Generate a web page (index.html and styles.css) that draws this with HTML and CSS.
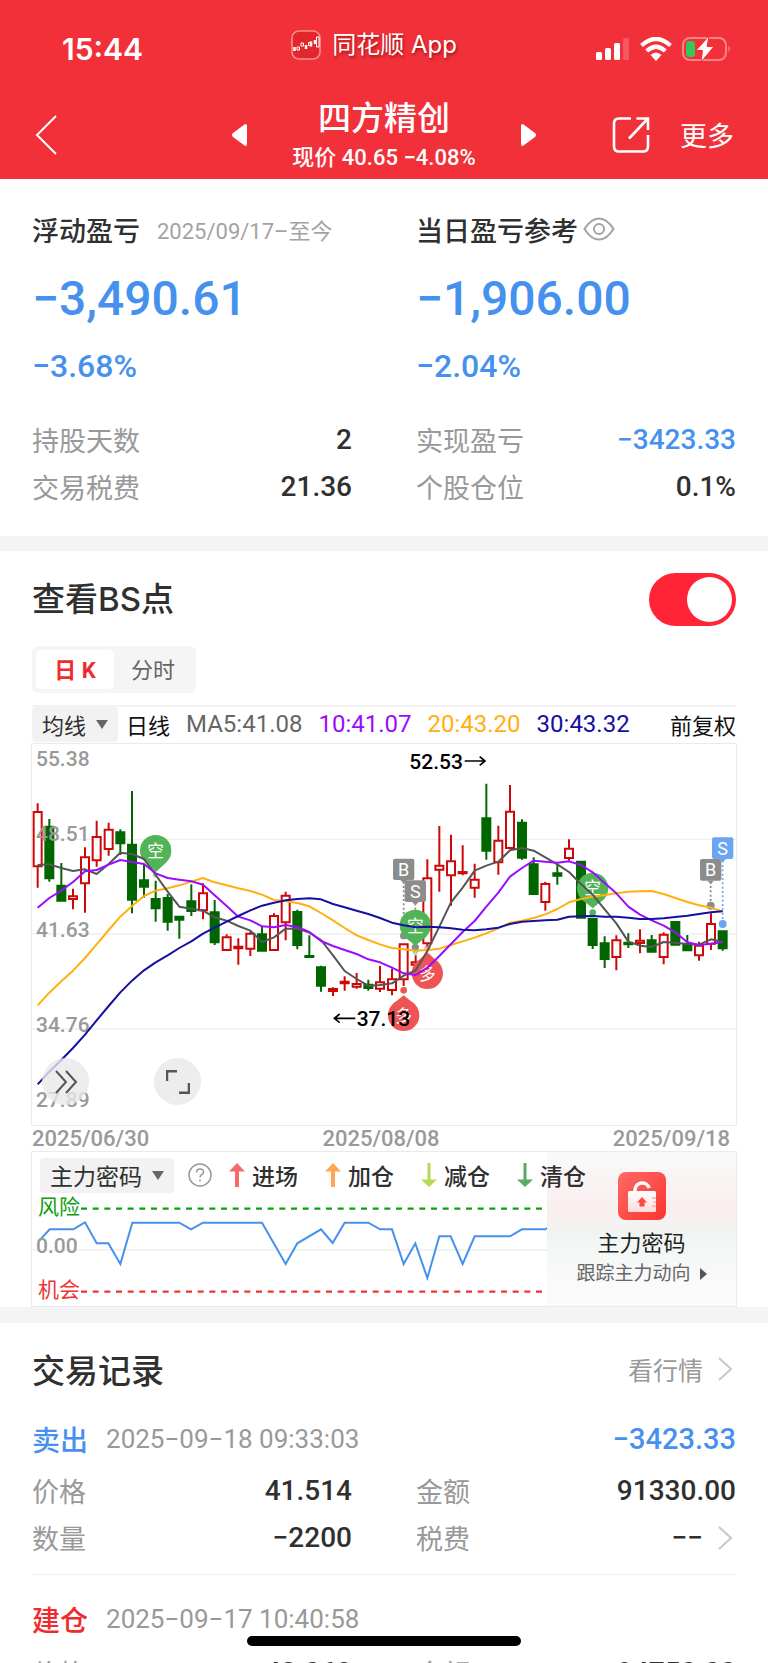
FILE: index.html
```html
<!DOCTYPE html>
<html lang="zh-CN">
<head>
<meta charset="utf-8">
<meta name="viewport" content="width=device-width, initial-scale=1">
<title>四方精创</title>
<link rel="stylesheet" href="styles.css">
</head>
<body>
<div class="screen">
  <header class="header">
    <div class="status">
      <span class="status-time">15:44</span>
      <span class="status-app">
        <svg class="app-icon" viewBox="0 0 30 30" aria-hidden="true">
          <rect x="1" y="1" width="28" height="28" rx="7" fill="#e3262b" stroke="#fa8f8f" stroke-width="1.6"/>
          <path d="M3.500 17v4M20 11.500v5M24 10v4M15 15v4" stroke="#fff" stroke-width="2.500"/>
          <path d="M6 17h2.500v3H6zM10 13h2.500v3H10zM17.500 12.500h2v3h-2zM25.500 7h2.500v10h-2.500z" fill="none" stroke="#fff"/>
        </svg>
        同花顺 App
      </span>
      <span class="status-icons">
        <svg width="34" height="24" viewBox="0 0 34 24" aria-hidden="true" fill="#fff">
          <rect x="0" y="15" width="6" height="8" rx="1.500"/><rect x="9" y="11" width="6" height="12" rx="1.500"/>
          <rect x="18" y="6" width="6" height="17" rx="1.500"/><rect x="27" y="1" width="6" height="22" rx="1.500" opacity=".2"/>
        </svg>
        <svg width="32" height="24" viewBox="0 0 32 24" aria-hidden="true" fill="none" stroke="#fff" stroke-width="4.200">
          <path d="M1.500 8.500Q16-4.500 30.500 8.500"/><path d="M6.700 14Q16 5.500 25.300 14"/>
          <path d="M10.500 18Q16 13 21.500 18L16 24z" fill="#fff" stroke="none"/>
        </svg>
        <svg width="50" height="26" viewBox="0 0 50 26" aria-hidden="true">
          <rect x="1" y="2" width="43" height="22" rx="7" fill="none" stroke="#f98388" stroke-width="2"/>
          <path d="M46.500 9.500q3 3.500 0 7z" fill="#f98388"/>
          <rect x="4" y="5" width="9" height="16" rx="3.500" fill="#34c759"/>
          <path d="M27 0L14 14.500h6.500L19 26 32 10.500h-7z" fill="#fff" stroke="#f23039" stroke-width="1"/>
        </svg>
      </span>
    </div>
    <nav class="nav">
      <button class="icon-btn nav-back" aria-label="返回">
        <svg width="24" height="40" viewBox="0 0 24 40" fill="none" stroke="#fff" stroke-width="2"><path d="M22 1L3 20l19 19"/></svg>
      </button>
      <div class="nav-center">
        <button class="icon-btn" aria-label="上一只"><svg width="17" height="24" viewBox="0 0 17 24" fill="#fff"><path d="M13.500 1.500Q16 0 16 3V21q0 3-2.500 1.500L2 14q-2-2 0-4z"/></svg></button>
        <div class="nav-title">
          <h1>四方精创</h1>
          <p>现价 40.65 −4.08%</p>
        </div>
        <button class="icon-btn" aria-label="下一只"><svg width="17" height="24" viewBox="0 0 17 24" fill="#fff"><path d="M3.500 1.500Q1 0 1 3V21q0 3 2.500 1.500L15 14q2-2 0-4z"/></svg></button>
      </div>
      <div class="nav-right">
        <button class="icon-btn" aria-label="分享"><svg width="38" height="38" viewBox="0 0 38 38" fill="none" stroke="#fff" stroke-width="2.600"><path d="M19 2.500H7q-5 0-5 5V30.500q0 5 5 5H31q5 0 5-5V19"/><path d="M24.500 2.500H36V14M36 2.500L17 22.500"/></svg></button>
        <button class="icon-btn nav-more">更多</button>
      </div>
    </nav>
  </header>

  <section class="summary">
    <div class="col">
      <h2>浮动盈亏 <small>2025/09/17–至今</small></h2>
      <p class="big">−3,490.61</p>
      <p class="pct">−3.68%</p>
      <dl class="facts">
        <div><dt>持股天数</dt><dd>2</dd></div>
        <div><dt>交易税费</dt><dd>21.36</dd></div>
      </dl>
    </div>
    <div class="col">
      <h2>当日盈亏参考<button class="icon-btn" aria-label="隐藏金额"><svg width="32" height="24" viewBox="0 0 32 24" fill="none" stroke="#a3a3a3" stroke-width="2"><path d="M1.500 12Q8 1.500 16 1.500T30.500 12Q24 22.500 16 22.500T1.500 12z"/><circle cx="16" cy="12" r="5"/></svg></button></h2>
      <p class="big">−1,906.00</p>
      <p class="pct">−2.04%</p>
      <dl class="facts">
        <div><dt>实现盈亏</dt><dd class="down">−3423.33</dd></div>
        <div><dt>个股仓位</dt><dd>0.1%</dd></div>
      </dl>
    </div>
  </section>

  <section class="points">
    <div class="points-head">
      <label for="bs">查看BS点</label>
      <input class="switch" type="checkbox" role="switch" id="bs" checked>
    </div>
    <div class="tabs">
      <button class="tab tab-on">日 K</button>
      <button class="tab">分时</button>
    </div>
    <div class="ma">
      <div class="ma-kind">
        <button class="drop">均线 <i class="caret"></i></button>
        <span class="ma-note">日线</span>
      </div>
      <span class="ma5">MA5:41.08</span>
      <span class="ma10">10:41.07</span>
      <span class="ma20">20:43.20</span>
      <span class="ma30">30:43.32</span>
      <span class="ma-note ma-adj">前复权</span>
    </div>
    <div class="kline">
      <svg class="kline-svg" viewBox="96 12 2112 1143" role="img" aria-label="日K线">
        <path class="grid" d="M96 298H2208M96 582H2208M96 867H2208"/>
        <g id="candles"></g>
        <g class="axis">
          <text x="108" y="78">55.38</text><text x="108" y="302">48.51</text><text x="108" y="590">41.63</text><text x="108" y="875">34.76</text><text x="108" y="1100">27.89</text>
        </g>
        <g class="marks">
          <g class="tag">
            <path class="dots" d="M1211 425V585M1246 490V620M2132 425V490"/>
            <rect x="1179" y="356" width="64" height="64" rx="6"/><path d="M1201 420h20l-10 10z"/><circle cx="1211" cy="587" r="11"/>
            <rect x="1214" y="421" width="64" height="65" rx="6"/><path d="M1236 486h20l-10 10z"/><circle cx="1246" cy="622" r="11"/>
            <rect x="2100" y="357" width="64" height="65" rx="6"/><path d="M2122 422h20l-10 10z"/><circle cx="2132" cy="497" r="12"/>
            <text x="1211" y="408">B</text><text x="1246" y="473">S</text><text x="2132" y="409">B</text>
          </g>
          <g class="tag tag-blue">
            <path class="dots" d="M2168 362V545"/>
            <rect x="2136" y="292" width="64" height="65" rx="6"/><path d="M2158 357h20l-10 10z"/><circle cx="2168" cy="552" r="12"/>
            <text x="2168" y="344">S</text>
          </g>
          <g class="pin pin-short">
            <circle cx="467" cy="332" r="47"/><path d="M434 366h66l-33 31z"/><circle cx="466" cy="405" r="8" opacity=".5"/><text x="467" y="351">空</text>
            <circle cx="1246" cy="556" r="47"/><path d="M1213 590h66l-33 27z"/><circle cx="1246" cy="636" r="8" opacity=".5"/><text x="1246" y="575">空</text>
            <circle cx="1778" cy="445" r="47"/><path d="M1745 478h66l-33 27z"/><circle cx="1778" cy="518" r="10"/><text x="1778" y="463">空</text>
          </g>
          <g class="pin pin-long">
            <circle cx="1282" cy="700" r="47"/><path d="M1250 666h64l-32-29z"/><circle cx="1282" cy="624" r="9" opacity=".5"/><text x="1282" y="719">多</text>
            <circle cx="1211" cy="826" r="47"/><path d="M1179 792h64l-32-26z"/><circle cx="1211" cy="751" r="10"/><text x="1211" y="845">多</text>
          </g>
        </g>
        <g id="averages"></g>
        <g class="peak">
          <text x="1228" y="86">52.53</text><path d="M1394 63h61m-16-13l16 13-16 13"/>
          <text x="1070" y="858">37.13</text><path d="M1066 835h-63m16-13l-16 13 16 13"/>
        </g>
      </svg>
      <button class="round round-next" aria-label="展开"><svg width="24" height="24" viewBox="0 0 24 24" fill="none" stroke="#555" stroke-width="2"><path d="M2 1l10 11L2 23M12 1l10 11-10 11"/></svg></button>
      <button class="round round-full" aria-label="全屏"><svg width="24" height="24" viewBox="0 0 24 24" fill="none" stroke="#555" stroke-width="2.500"><path d="M1 11V1.300H11M23 13v9.700H13"/></svg></button>
    </div>
    <div class="dates"><span>2025/06/30</span><span>2025/08/08</span><span>2025/09/18</span></div>
    <div class="code">
      <div class="legend">
        <button class="drop">主力密码 <i class="caret"></i></button>
        <svg class="help" width="24" height="24" viewBox="0 0 24 24" fill="none" stroke="#999" stroke-width="1.500" role="img" aria-label="说明"><circle cx="12" cy="12" r="11"/><path d="M8.500 9.500q0-3.500 3.500-3.500t3.500 3q0 1.500-1.800 2.700T12 14.500M12 16.500v2"/></svg>
        <span class="sig"><svg width="16" height="24" viewBox="0 0 16 24" fill="#f76b6b"><path d="M8 0l8 8.500H10V24H6V8.500H0z"/></svg>进场</span>
        <span class="sig"><svg width="16" height="24" viewBox="0 0 16 24" fill="#ffa657"><path d="M8 0l8 8.500H10V24H6V8.500H0z"/></svg>加仓</span>
        <span class="sig"><svg width="16" height="24" viewBox="0 0 16 24" fill="#b2dc55"><path d="M8 24l8-7.500H9.500V0h-3v16.500H0z"/></svg>减仓</span>
        <span class="sig"><svg width="16" height="24" viewBox="0 0 16 24" fill="#5caa62"><path d="M8 24l8-7.500H9.500V0h-3v16.500H0z"/></svg>清仓</span>
      </div>
      <svg class="code-svg" viewBox="96 222 1545 336" role="img" aria-label="主力密码走势">
        <path class="grid" d="M96 390H1641"/>
        <path class="risk" d="M243 266H1641"/>
        <path class="chance" d="M243 515H1641"/>
        <path class="trend" d="M118 362L149 328H220L255 307L290 370H325L361 432L397 308H538L573 328L609 308H786L857 432L892 370L963 328L998 369L1034 308H1105L1140 328H1176L1211 432L1246 370L1282 474L1318 349H1352L1388 432L1424 349H1530L1566 328H1637L1641 323"/>
        <text class="risk-t" x="114" y="283">风险</text><text class="zero-t" x="108" y="400">0.00</text><text class="chance-t" x="114" y="531">机会</text>
      </svg>
      <a class="promo" href="#code">
        <svg width="48" height="48" viewBox="0 0 48 48" aria-hidden="true">
          <defs>
            <linearGradient id="lk" x1="0" y1="0" x2="1" y2="1"><stop offset="0" stop-color="#ff6a66"/><stop offset="1" stop-color="#fb342f"/></linearGradient>
            <linearGradient id="lb" x1="0" y1="0" x2="0" y2="1"><stop offset="0" stop-color="#fff"/><stop offset="1" stop-color="#ffdcda"/></linearGradient>
          </defs>
          <rect width="48" height="48" rx="8" fill="url(#lk)"/>
          <path d="M17 20v-2.500a7.300 7.300 0 0 1 14.200-1.500" fill="none" stroke="#fff" stroke-width="3.500"/>
          <rect x="10" y="19" width="28" height="21" rx="1.500" fill="url(#lb)"/>
          <path d="M24 25l5 5.500H26.500V34.500h-5V30.500H19z" fill="#fb4a45"/><path d="M34 26h4M35.500 30H38M34 34h4" stroke="#fcaaa6" stroke-width="1.600"/>
        </svg>
        <strong>主力密码</strong>
        <span class="promo-sub">跟踪主力动向 <i class="caret-r"></i></span>
      </a>
    </div>
  </section>

  <section class="records">
    <div class="records-head">
      <h2>交易记录</h2>
      <a href="#quote">看行情<svg class="chev" width="14" height="24" viewBox="0 0 14 24"><path d="M1 1l12 11L1 23"/></svg></a>
    </div>
    <article class="record">
      <div class="record-top"><b class="down">卖出</b><time>2025−09−18 09:33:03</time><strong class="down">−3423.33</strong></div>
      <dl class="facts">
        <div><dt>价格</dt><dd>41.514</dd></div><div><dt>金额</dt><dd>91330.00</dd></div>
        <div><dt>数量</dt><dd>−2200</dd></div><div><dt>税费</dt><dd>−−<svg class="chev" width="14" height="24" viewBox="0 0 14 24"><path d="M1 1l12 11L1 23"/></svg></dd></div>
      </dl>
    </article>
    <article class="record">
      <div class="record-top"><b class="up">建仓</b><time>2025−09−17 10:40:58</time></div>
      <dl class="facts">
        <div><dt>价格</dt><dd>43.068</dd></div><div><dt>金额</dt><dd>94750.00</dd></div>
      </dl>
    </article>
  </section>
  <div class="home-bar"></div>
</div>
<script src="chart.js"></script>
</body>
</html>
```

FILE: styles.css
```css
* { box-sizing: border-box; }
body, h1, h2, p, dl, dd { margin: 0; }
body {
  background: #fff;
  color: #303030;
  font-family: Roboto, "Noto Sans CJK SC", sans-serif;
}
button { font: inherit; color: inherit; border: 0; background: none; padding: 0; }
a { color: inherit; text-decoration: none; }
svg { display: block; flex: none; }
.screen { position: relative; height: 100vh; overflow: hidden; }
.icon-btn { display: flex; align-items: center; }
.down { color: #4691ee; }
.up { color: #f02b2f; }

.header { background: #f23039; color: #fff; padding-top: 24px; }
.status {
  display: grid;
  grid-template-columns: 1fr auto 1fr;
  align-items: center;
  height: 50px;
  padding: 0 36px;
}
.status-time { font: 600 30px/36px Inter, sans-serif; padding-left: 26px; }
.status-app {
  display: flex; align-items: center; gap: 11px;
  font: 24px/30px Inter, "Noto Sans CJK SC", sans-serif;
  text-shadow: 1px 2px 3px rgba(110, 0, 0, .6);
  padding: 0 20px 8px 0;
}
.app-icon { width: 30px; height: 30px; }
.status-icons { display: flex; justify-content: flex-end; align-items: center; gap: 10px; }
.nav {
  display: grid;
  grid-template-columns: 1fr auto 1fr;
  align-items: center;
  height: 105px;
  padding: 16px 34px 0;
}
.nav-center { display: flex; align-items: center; gap: 44px; }
.nav-title { text-align: center; }
.nav-title h1 { font-size: 33px; line-height: 46px; font-weight: 500; }
.nav-title p { font-size: 22px; line-height: 32px; font-weight: 500; }
.nav-right { display: flex; justify-content: flex-end; align-items: center; gap: 30px; }
.nav-more { font-size: 27px; }

.summary {
  display: grid; grid-template-columns: 1fr 1fr; column-gap: 64px;
  padding: 30px 32px 26px;
  border-bottom: 15px solid #f4f4f4;
}
.summary h2 { display: flex; align-items: center; gap: 5px; height: 40px; font-size: 27px; font-weight: 500; }
.summary small { font-size: 22px; font-weight: 400; color: #a3a3a3; padding-left: 12px; white-space: nowrap; }
.big { font-size: 48px; line-height: 56px; font-weight: 500; color: #4691ee; padding-top: 22px; }
.pct { font-size: 32px; line-height: 40px; font-weight: 500; color: #4691ee; padding-top: 19px; margin-bottom: 30px; }
.facts > div { display: flex; justify-content: space-between; align-items: center; height: 47px; }
.facts dt { font-size: 27px; color: #999; }
.facts dd { display: flex; align-items: center; font-size: 28px; font-weight: 500; }

.points { padding: 16px 32px 0; border-bottom: 16px solid #f4f4f4; }
.points-head { display: flex; justify-content: space-between; align-items: center; height: 64px; }
.points-head label { font: 500 33px/40px Inter, "Noto Sans CJK SC", sans-serif; }
.switch { appearance: none; width: 87px; height: 53px; margin: 0; border-radius: 27px; background: #ff2436; display: flex; justify-content: flex-end; padding: 4px; }
.switch::before { content: ""; width: 45px; height: 45px; border-radius: 50%; background: #fff; }
.tabs { display: inline-flex; margin-top: 15px; padding: 4px; background: #f5f5f5; border-radius: 6px; }
.tab { width: 78px; height: 39px; padding-bottom: 4px; border-radius: 5px; font-size: 22px; color: #666; }
.tab-on { background: #fff; color: #f02b2f; font-weight: 700; }
.ma {
  display: flex; align-items: center; gap: 16px;
  margin-top: 12px; padding-bottom: 2px; height: 38px;
  border-top: 2px solid #f2f2f2;
  font-size: 24px;
  white-space: nowrap;
}
.ma-kind { display: flex; align-items: center; gap: 8px; }
.drop { display: flex; align-items: center; gap: 10px; height: 35px; padding: 0 10px; background: #f2f2f2; border-radius: 4px; font-size: 22px; }
.caret { border: 6px solid transparent; border-top: 9px solid #666; border-bottom: 0; }
.caret-r { border: 6px solid transparent; border-left: 7px solid #555; border-right: 0; }
.ma-note { font-size: 22px; color: #111; }
.ma5 { color: #666; }
.ma10 { color: #9b0cff; }
.ma20 { color: #ffb010; }
.ma30 { color: #1410a0; }
.ma-adj { margin-left: auto; }

.kline { position: relative; margin: 0 -1px; border: 1px solid #eaeaea; }
.kline-svg { width: 100%; overflow: visible; }
.grid { stroke: #efefef; stroke-width: 4; fill: none; }
.axis text, .zero-t { font-size: 63px; font-weight: 500; fill: #999; }
.dots { fill: none; stroke-width: 5; stroke-dasharray: 6 7; stroke: #858585; }
.tag { fill: #8c8c8c; }
.tag text { fill: #fff; font-size: 54px; text-anchor: middle; }
.tag-blue { fill: #69a7f2; }
.tag-blue .dots { stroke: #69a7f2; }
.pin text { fill: #fff; font-size: 50px; text-anchor: middle; }
.pin-short { fill: #51b557; }
.pin-long { fill: #ee5454; }
.peak text { font-size: 63px; font-weight: 500; fill: #000; }
.peak path { fill: none; stroke: #000; stroke-width: 5; }
.candle-up { stroke: #cc0808; fill: #fff; stroke-width: 6; }
.candle-down { stroke: #006600; fill: #006600; stroke-width: 6; }
.average { fill: none; stroke-width: 6; stroke-linejoin: round; }
.round {
  position: absolute; bottom: 20px;
  width: 47px; height: 47px; border-radius: 50%;
  background: rgba(232, 232, 232, .8);
  display: grid; place-items: center;
}
.round-next { left: 10px; }
.round-full { left: 122px; }
.dates { display: flex; justify-content: space-between; padding-right: 6px; font-size: 22px; line-height: 25px; font-weight: 500; color: #999; }

.code { display: grid; grid-template-columns: 515fr 189fr; grid-template-rows: 42px auto; margin: 0 -1px; border: 1px solid #eaeaea; }
.legend { grid-area: 1 / 1 / 2 / 3; z-index: 1; display: flex; align-items: center; padding: 4px 8px 0; font-size: 23px; font-weight: 500; white-space: nowrap; }
.legend .drop { font-weight: 400; font-size: 23px; }
.help { margin: 0 17px 0 14px; }
.sig { display: flex; align-items: center; gap: 7px; width: 96px; }
.code-svg { grid-area: 2 / 1; width: 100%; }
.risk, .chance { stroke-width: 7; stroke-dasharray: 18 17; }
.risk { stroke: #0ca00c; }
.chance { stroke: #ee3535; }
.trend { fill: none; stroke: #4691ee; stroke-width: 6; }
.risk-t, .chance-t { font-size: 63px; }
.risk-t { fill: #0ca00c; }
.chance-t { fill: #ee3535; }
.promo {
  grid-area: 1 / 2 / 3 / 3;
  display: flex; flex-direction: column; align-items: center;
  padding-top: 20px;
  background: linear-gradient(#fafafa, #faf3f3 22%, #f9eeee 36%, #f1f4f2 54%, #f3f7f5 64%, #fafafa 86%);
}
.promo strong { margin-top: 8px; font-size: 22px; line-height: 32px; font-weight: 400; color: #222; }
.promo-sub { display: flex; align-items: center; gap: 9px; font-size: 19px; line-height: 28px; color: #666; }

.records { padding: 18px 32px 0; }
.records-head { display: flex; justify-content: space-between; align-items: center; height: 56px; }
.records-head h2 { font-size: 33px; font-weight: 500; }
.records-head a { display: flex; align-items: center; font-size: 25px; color: #999; }
.chev { margin: 0 4px 0 15px; fill: none; stroke: #c8c8c8; stroke-width: 2; }
.record { border-bottom: 1px solid #efefef; padding-bottom: 13px; }
.record-top { display: flex; align-items: center; height: 52px; margin: 16px 0 2px; }
.record-top b { font-size: 28px; font-weight: 500; }
.record-top time { margin-left: 18px; font-size: 26px; color: #999; }
.record-top strong { margin-left: auto; font-size: 29px; font-weight: 500; }
.record .facts { display: grid; grid-template-columns: 1fr 1fr; column-gap: 64px; }
.record + .record .record-top { margin: 18px 0 4px; }
.home-bar {
  position: absolute; bottom: 17px; left: 50%; transform: translateX(-50%);
  width: 274px; height: 10px; border-radius: 5px; background: #000;
}
```

FILE: chart.js
```js
const NS = 'http://www.w3.org/2000/svg';
const START = 113;
const STEP = 35.43;

// [direction, high, body top, body bottom, low]
const candles = [
  ['r',190,215,380,443],['g',237,259,416,425],['g',369,436,483,483],['r',446,468,478,508],['r',322,351,431,518],
  ['r',242,290,362,380],['r',248,268,328,347],['g',268,276,311,345],['g',153,313,480,520],['g',373,420,441,473],
  ['g',422,476,506,545],['g',462,473,546,572],['g',527,529,540,596],['g',433,483,514,528],['r',430,459,512,538],
  ['g',480,516,608,615],['r',583,591,631,631],['r',595,619,626,674],['r',575,580,627,648],['g',560,582,633,633],
  ['r',520,527,631,631],['r',455,466,548,601],['g',509,515,616,628],['g',586,647,652,652],['g',677,681,738,755],
  ['r',742,746,754,768],['r',709,724,731,752],['r',699,731,741,746],['g',719,733,745,752],['r',678,726,747,756],
  ['r',686,717,751,766],['r',612,612,719,738],['r',646,666,675,690],['r',358,414,611,620],['r',258,376,390,455],
  ['r',284,363,407,497],['r',316,395,401,406],['r',371,418,444,473],['g',131,234,333,359],['r',257,301,368,404],
  ['r',135,214,325,325],['g',238,247,354,359],['g',352,372,463,463],['r',425,431,487,512],['g',375,399,408,434],
  ['r',298,325,355,362],['g',362,364,534,534],['g',534,536,616,627],['g',589,609,658,684],['r',586,600,652,691],
  ['g',580,607,614,624],['r',568,601,610,640],['g',585,600,636,636],['r',577,583,652,673],['g',545,545,615,615],
  ['g',585,611,632,632],['r',605,616,647,662],['r',520,551,612,630],['g',573,573,626,632]
];

const averages = {
  '#ffb010': [796,758,724,692,654,613,570,530,498,468,452,445,436,425,414,427,436,445,453,464,480,484,489,499,519,541,564,586,600,613,624,628,632,630,626,615,604,593,580,565,548,542,534,523,507,487,477,470,465,460,455,454,453,462,474,486,496,503,515],
  '#555555': [375,373,384,393,388,402,372,338,342,357,405,455,500,506,512,532,542,558,572,606,592,566,566,578,600,646,693,717,737,735,730,707,691,633,560,487,443,392,377,365,331,324,332,352,373,396,432,464,508,550,605,617,621,606,608,612,614,598,606],
  '#9b0cff': [503,474,452,426,394,390,374,360,366,372,400,414,419,424,434,466,498,530,541,559,562,555,561,576,603,618,630,642,658,667,683,700,705,683,648,612,576,543,500,458,410,384,362,365,368,364,375,397,429,460,500,524,541,557,577,607,615,611,606],
  '#1410a0': [1033,995,960,924,884,841,798,757,722,691,667,646,624,604,581,563,545,528,511,497,488,481,477,475,478,492,502,512,522,534,548,556,562,560,562,565,569,571,568,563,552,545,543,541,539,530,529,528,530,530,533,537,537,535,531,527,522,517,514]
};

function add(parent, attrs) {
  const path = document.createElementNS(NS, 'path');
  for (const key in attrs) path.setAttribute(key, attrs[key]);
  parent.appendChild(path);
}

const candleLayer = document.getElementById('candles');
candles.forEach(([dir, high, top, bottom, low], i) => {
  const x = Math.round(START + STEP * i);
  add(candleLayer, {
    class: dir === 'r' ? 'candle-up' : 'candle-down',
    d: `M${x} ${high}V${top}M${x} ${bottom}V${low}M${x - 12} ${top + 1}h24V${bottom - 1}h-24z`
  });
});

const averageLayer = document.getElementById('averages');
for (const color in averages) {
  add(averageLayer, {
    class: 'average',
    stroke: color,
    d: 'M' + averages[color].map((y, i) => `${Math.round(START + STEP * i)} ${y}`).join('L')
  });
}
```
